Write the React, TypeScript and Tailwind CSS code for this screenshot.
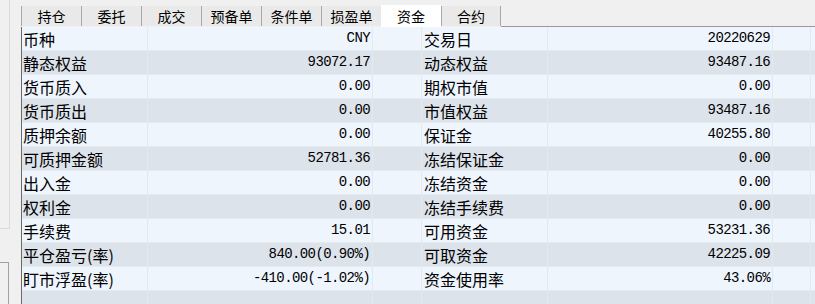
import React from "react";

const rows: [string, string, string, string][] = [
  ["币种", "CNY", "交易日", "20220629"],
  ["静态权益", "93072.17", "动态权益", "93487.16"],
  ["货币质入", "0.00", "期权市值", "0.00"],
  ["货币质出", "0.00", "市值权益", "93487.16"],
  ["质押余额", "0.00", "保证金", "40255.80"],
  ["可质押金额", "52781.36", "冻结保证金", "0.00"],
  ["出入金", "0.00", "冻结资金", "0.00"],
  ["权利金", "0.00", "冻结手续费", "0.00"],
  ["手续费", "15.01", "可用资金", "53231.36"],
  ["平仓盈亏(率)", "840.00(0.90%)", "可取资金", "42225.09"],
  ["盯市浮盈(率)", "-410.00(-1.02%)", "资金使用率", "43.06%"],
];

const tabs = ["持仓", "委托", "成交", "预备单", "条件单", "损盈单", "资金", "合约"];

const cjk = "font-['Noto_Sans_CJK_SC','Noto_Sans',sans-serif]";
const mono = "font-['Liberation_Mono','DejaVu_Sans_Mono',monospace]";

function Row({ r, i }: { r?: [string, string, string, string]; i: number }) {
  const bg = i % 2 === 1 ? "bg-[#dde3ea]" : "bg-[#eef5fd]";
  const cell = "h-full border-r border-[#e4e9ee] flex items-center";
  return (
    <div className={`h-[24px] shrink-0 flex border-b border-[#e6ebf0] ${bg}`}>
      <div className={`${cell} w-[126px] pl-[1px] text-[16px] text-black ${cjk}`}>{r?.[0]}</div>
      <div className={`${cell} w-[225px] justify-end pr-[2px] text-[14px] tracking-[-0.6px] text-black ${mono}`}>{r?.[1]}</div>
      <div className={`${cell} w-[49px]`} />
      <div className={`${cell} w-[126px] pl-[2px] text-[16px] text-black ${cjk}`}>{r?.[2]}</div>
      <div className={`${cell} w-[225px] justify-end pr-[2px] text-[14px] tracking-[-0.6px] text-black ${mono}`}>{r?.[3]}</div>
      <div className={`${cell} w-[38px]`} />
      <div className="flex-1" />
    </div>
  );
}

export default function App() {
  return (
    <div className="w-[815px] h-[304px] bg-[#f0f0f0] flex overflow-hidden">
      <div className="w-[21px] shrink-0 flex flex-col">
        <div className="w-[10px] h-[229px] border-r border-b border-[#dadada]" />
        <div className="w-[9px] mt-[33px] flex-1 border-t border-r border-[#a0a0a0]" />
      </div>
      <div className="flex-1 flex flex-col min-w-0">
        <div className="h-[27px] shrink-0 flex items-end">
          {tabs.map((t) =>
            t === "资金" ? (
              <div
                key={t}
                className={`w-[60px] h-[22px] bg-white flex items-center justify-center text-[14px] text-black ${cjk}`}
              >
                {t}
              </div>
            ) : (
              <div
                key={t}
                className={`w-[60px] h-[20px] mb-[1px] bg-[#e9e9e9] border-l border-[#a8a8a8] flex items-center justify-center text-[14px] text-black ${cjk} ${t === "合约" ? "border-r" : ""}`}
              >
                {t}
              </div>
            )
          )}
          <div className="flex-1 h-full border-b border-[#999999]" />
        </div>
        <div className="flex-1 flex flex-col border-l border-[#6a6a6a] overflow-hidden">
          {rows.map((r, i) => (
            <Row key={i} r={r} i={i} />
          ))}
          <Row i={11} />
        </div>
      </div>
    </div>
  );
}
